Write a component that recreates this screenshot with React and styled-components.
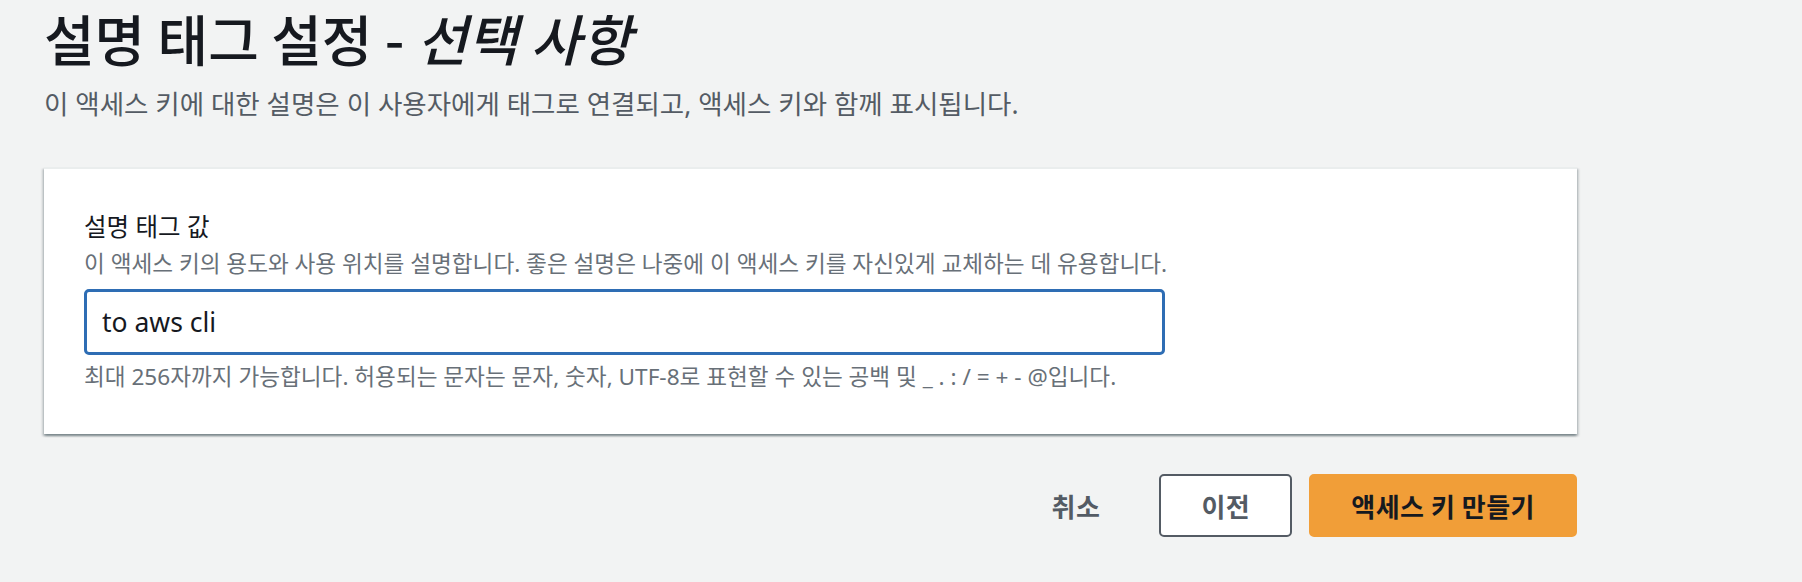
import React, { useState } from 'react';
import styled, { createGlobalStyle } from 'styled-components';

const GlobalStyle = createGlobalStyle`
  html, body {
    margin: 0;
    padding: 0;
    background: #f2f3f3;
  }
  body {
    font-family: "Noto Sans", "Noto Sans CJK KR", sans-serif;
    color: #16191f;
  }
`;

const App = () => {
  const [value, setValue] = useState('to aws cli');

  return (
    <>
      <GlobalStyle />
      <Page>
        <Header>
          <Title>
            설명 태그 설정 - <Optional>선택 사항</Optional>
          </Title>
          <Subtitle>이 액세스 키에 대한 설명은 이 사용자에게 태그로 연결되고, 액세스 키와 함께 표시됩니다.</Subtitle>
        </Header>

        <Card>
          <Field>
            <Label htmlFor="tag-value">설명 태그 값</Label>
            <Hint>이 액세스 키의 용도와 사용 위치를 설명합니다. 좋은 설명은 나중에 이 액세스 키를 자신있게 교체하는 데 유용합니다.</Hint>
            <TextInput id="tag-value" value={value} onChange={(e) => setValue(e.target.value)} />
            <Hint>최대 256자까지 가능합니다. 허용되는 문자는 문자, 숫자, UTF-8로 표현할 수 있는 공백 및 _ . : / = + - @입니다.</Hint>
          </Field>
        </Card>

        <Actions>
          <Button variant="link">취소</Button>
          <Button variant="normal">이전</Button>
          <Button variant="primary">액세스 키 만들기</Button>
        </Actions>
      </Page>
    </>
  );
};

// Styled Components

const Page = styled.div`
  width: 1533px;
  padding: 7px 0 0 44px;
`;

const Header = styled.div`
  display: flex;
  flex-direction: column;
  gap: 21px;
  margin-bottom: 47px;
`;

const Title = styled.h1`
  margin: 0;
  font-family: "Noto Sans CJK KR", sans-serif;
  font-size: 55px;
  font-weight: 500;
  line-height: 60px;
  color: #16191f;
`;

const Optional = styled.i`
  font-style: italic;
`;

const Subtitle = styled.p`
  margin: 0;
  font-size: 26.5px;
  line-height: 32px;
  color: #545b64;
`;

const Card = styled.div`
  background: #fff;
  border-top: 2px solid #eaeded;
  box-shadow: 0 2px 2px 0 rgba(0, 28, 36, 0.3), 2px 2px 2px 0 rgba(0, 28, 36, 0.15),
    -2px 2px 2px 0 rgba(0, 28, 36, 0.15);
  padding: 41px 40px 41px;
`;

const Field = styled.div`
  display: flex;
  flex-direction: column;
  align-items: flex-start;
`;

const Label = styled.label`
  font-size: 24.5px;
  font-weight: 400;
  line-height: 34px;
  color: #16191f;
`;

const Hint = styled.div`
  font-size: 22.6px;
  line-height: 32px;
  color: #687078;
  margin-top: 4px;
`;

const TextInput = styled.input`
  box-sizing: border-box;
  width: 1081px;
  height: 66px;
  margin: 9px 0 2px;
  padding: 0 15px;
  border: 3px solid #2e6db4;
  border-radius: 5px;
  background: #fff;
  font-family: "Noto Sans", "Noto Sans CJK KR", sans-serif;
  font-size: 26.5px;
  color: #16191f;
  outline: none;
`;

const Actions = styled.div`
  display: flex;
  justify-content: flex-end;
  align-items: center;
  gap: 17px;
  margin-top: 40px;
`;

const Button = styled.button`
  box-sizing: border-box;
  height: 63px;
  padding: 0 40px;
  border-radius: 5px;
  font-family: "Noto Sans CJK KR", sans-serif;
  font-size: 26px;
  font-weight: 700;
  letter-spacing: 0.5px;
  cursor: pointer;
  border: 2px solid
    ${(props) => (props.variant === 'normal' ? '#545b64' : props.variant === 'primary' ? '#f19e38' : 'transparent')};
  background: ${(props) => (props.variant === 'primary' ? '#f19e38' : props.variant === 'normal' ? '#fff' : 'transparent')};
  color: ${(props) => (props.variant === 'primary' ? '#16191f' : '#545b64')};
`;

export default App;
